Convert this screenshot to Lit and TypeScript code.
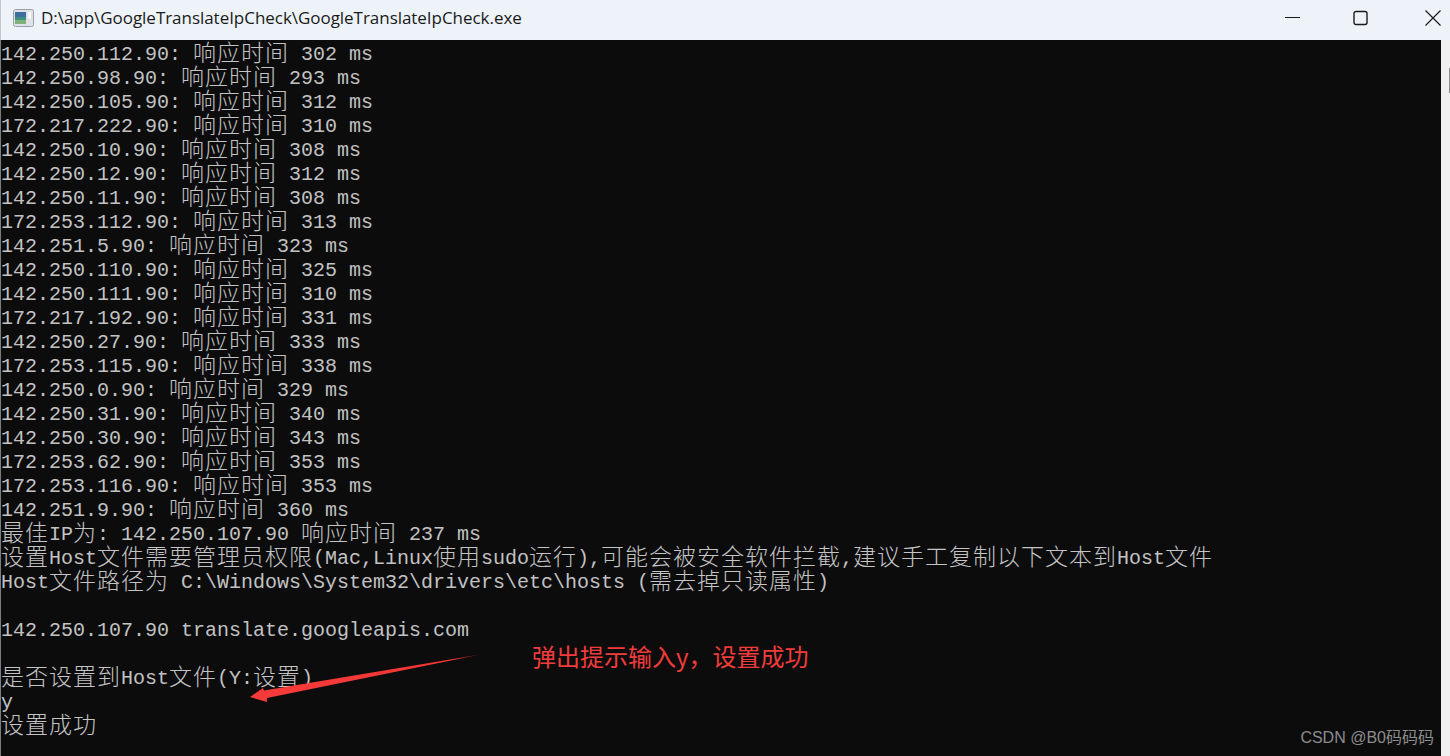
import { LitElement, html, css, svg } from "lit";
import { customElement } from "lit/decorators.js";

const LINES = [
  "142.250.112.90: 响应时间 302 ms",
  "142.250.98.90: 响应时间 293 ms",
  "142.250.105.90: 响应时间 312 ms",
  "172.217.222.90: 响应时间 310 ms",
  "142.250.10.90: 响应时间 308 ms",
  "142.250.12.90: 响应时间 312 ms",
  "142.250.11.90: 响应时间 308 ms",
  "172.253.112.90: 响应时间 313 ms",
  "142.251.5.90: 响应时间 323 ms",
  "142.250.110.90: 响应时间 325 ms",
  "142.250.111.90: 响应时间 310 ms",
  "172.217.192.90: 响应时间 331 ms",
  "142.250.27.90: 响应时间 333 ms",
  "172.253.115.90: 响应时间 338 ms",
  "142.250.0.90: 响应时间 329 ms",
  "142.250.31.90: 响应时间 340 ms",
  "142.250.30.90: 响应时间 343 ms",
  "172.253.62.90: 响应时间 353 ms",
  "172.253.116.90: 响应时间 353 ms",
  "142.251.9.90: 响应时间 360 ms",
  "最佳IP为: 142.250.107.90 响应时间 237 ms",
  "设置Host文件需要管理员权限(Mac,Linux使用sudo运行),可能会被安全软件拦截,建议手工复制以下文本到Host文件",
  "Host文件路径为 C:\\Windows\\System32\\drivers\\etc\\hosts (需去掉只读属性)",
  "",
  "142.250.107.90 translate.googleapis.com",
  "",
  "是否设置到Host文件(Y:设置)",
  "y",
  "设置成功",
];

const runs = (line: string) =>
  line
    .split(/([\u3000-\u9fff]+)/)
    .filter((s) => s.length)
    .map((s) =>
      /[\u3000-\u9fff]/.test(s) ? html`<span class="cjk">${s}</span>` : html`<span>${s}</span>`
    );

@customElement("app-root")
export class AppRoot extends LitElement {
  static styles = css`
    :host {
      display: block;
      width: 1450px;
      height: 756px;
      overflow: hidden;
    }
    .window {
      position: relative;
      display: flex;
      flex-direction: column;
      width: 1450px;
      height: 756px;
      background: #0c0c0c;
    }
    .titlebar {
      flex: none;
      height: 40px;
      display: flex;
      align-items: center;
      padding: 0 0 5px 12px;
      background: #eef3fa;
      border-left: 1px solid #c4c6c9;
      box-sizing: border-box;
      color: #1a1a1a;
    }
    .app-icon {
      width: 21px;
      height: 18px;
      flex: none;
    }
    .title {
      margin-left: 7px;
      font: 17px/20px "Open Sans", "Noto Sans", sans-serif;
      letter-spacing: -0.04px;
      white-space: nowrap;
    }
    .controls {
      margin-left: auto;
      display: flex;
      align-items: center;
    }
    .ctl {
      width: 16px;
      height: 16px;
      display: block;
    }
    .ctl.min {
      margin-right: 52px;
    }
    .ctl.max {
      margin-right: 56px;
    }
    .ctl.close {
      margin-right: 9px;
    }
    .body {
      flex: 1;
      display: flex;
      min-height: 0;
    }
    .console {
      flex: 1;
      padding: 3px 0 0 0;
      box-sizing: border-box;
      border-left: 1px solid #7d7d7d;
      font-family: "Liberation Mono", "Noto Sans CJK SC", monospace;
      font-size: 20px;
      color: #c2c2c2;
    }
    .line {
      height: 24px;
      line-height: 24px;
      white-space: pre;
    }
    .cjk {
      font-family: "Noto Sans CJK SC", sans-serif;
      font-size: 23px;
      font-weight: 300;
      line-height: 0;
      letter-spacing: 1px;
      vertical-align: -1px;
      color: #c4c4c4;
    }
    .scroll {
      flex: none;
      width: 9px;
      background: #f0f0f0;
      position: relative;
    }
    .thumb {
      position: absolute;
      right: 0;
      top: 28px;
      width: 1px;
      height: 25px;
      background: #8b8b8b;
    }
    .arrow {
      position: absolute;
      left: 240px;
      top: 645px;
      width: 250px;
      height: 60px;
    }
    .note {
      position: absolute;
      left: 532px;
      top: 639px;
      font: 24px/34px "Noto Sans CJK SC", sans-serif;
      color: #f23c3c;
      white-space: nowrap;
    }
    .mark {
      position: absolute;
      right: 16px;
      top: 728px;
      font: 16px/20px "Liberation Sans", "Noto Sans CJK SC", sans-serif;
      color: #8c8c8c;
      white-space: nowrap;
    }
  `;

  render() {
    return html`
      <div class="window">
        <div class="titlebar">
          <svg class="app-icon" viewBox="0 0 21 18">
            <rect x="0.5" y="0.5" width="20" height="17" rx="2" fill="#dfe3e8" stroke="#9aa0a6" />
            <rect x="2" y="3" width="11" height="12" fill="#3f8f83" />
            <rect x="2" y="3" width="11" height="5" fill="#3d6e9f" />
            <rect x="2" y="11" width="11" height="4" fill="#7fb27a" />
            <rect x="15" y="3" width="3" height="7" fill="#f7f8f9" />
          </svg>
          <span class="title">D:\\app\\GoogleTranslateIpCheck\\GoogleTranslateIpCheck.exe</span>
          <div class="controls">
            <svg class="ctl min" viewBox="0 0 16 16"><path d="M0 7.5H15" stroke="#1a1a1a" stroke-width="1" fill="none" /></svg>
            <svg class="ctl max" viewBox="0 0 16 16"><rect x="1" y="1.5" width="13" height="13" rx="2" stroke="#1a1a1a" stroke-width="1.4" fill="none" /></svg>
            <svg class="ctl close" viewBox="0 0 16 16"><path d="M0.5 0.5L15.5 15.5M15.5 0.5L0.5 15.5" stroke="#1a1a1a" stroke-width="1.2" fill="none" /></svg>
          </div>
        </div>
        <div class="body">
          <div class="console">
            ${LINES.map((l) => html`<div class="line">${runs(l)}</div>`)}
          </div>
          <div class="scroll"><div class="thumb"></div></div>
        </div>
        <svg class="arrow" viewBox="0 0 250 60">
          ${svg`<defs><linearGradient id="a" x1="0" x2="1" y1="0" y2="0">
            <stop offset="0" stop-color="#f93a3a"/><stop offset="0.88" stop-color="#f03535"/><stop offset="1" stop-color="#5a1515"/>
          </linearGradient></defs>
          <path d="M10 52L23 43L24 45.5L243 9L27 53L27 57Z" fill="url(#a)"/>`}
        </svg>
        <div class="note">弹出提示输入y，设置成功</div>
        <div class="mark">CSDN @B0码码码</div>
      </div>
    `;
  }
}
